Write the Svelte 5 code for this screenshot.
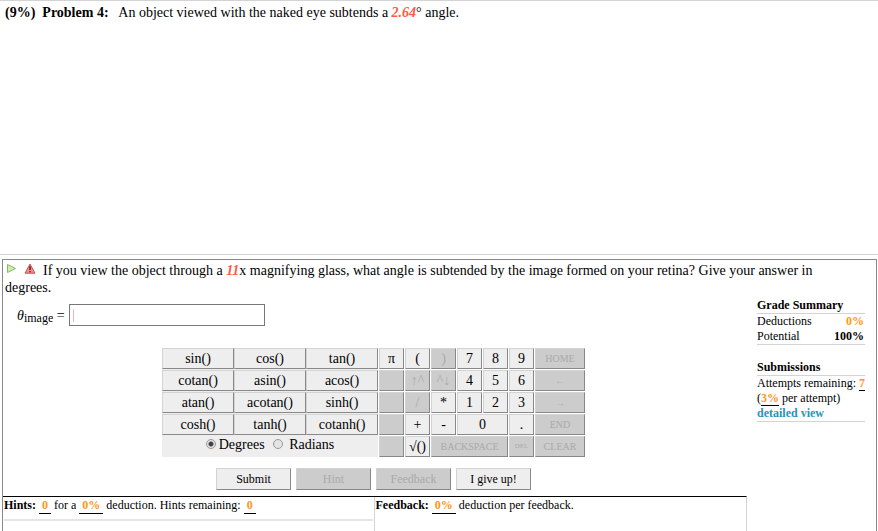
<script lang="ts">
	interface Key {
		label: string;
		name?: string;
		disabled?: boolean;
		span?: number;
		size?: 'small' | 'tiny';
	}

	const functions = [
		'sin()', 'cos()', 'tan()',
		'cotan()', 'asin()', 'acos()',
		'atan()', 'acotan()', 'sinh()',
		'cosh()', 'tanh()', 'cotanh()'
	];

	const keys: Key[] = [
		{ label: 'π' },
		{ label: '(' },
		{ label: ')', disabled: true },
		{ label: '7' },
		{ label: '8' },
		{ label: '9' },
		{ label: 'HOME', disabled: true, size: 'small' },

		{ label: '', name: 'unused', disabled: true },
		{ label: '↑^', disabled: true },
		{ label: '^↓', disabled: true },
		{ label: '4' },
		{ label: '5' },
		{ label: '6' },
		{ label: '←', disabled: true, size: 'small' },

		{ label: '', name: 'unused', disabled: true },
		{ label: '/', disabled: true },
		{ label: '*' },
		{ label: '1' },
		{ label: '2' },
		{ label: '3' },
		{ label: '→', disabled: true, size: 'small' },

		{ label: '', name: 'unused', disabled: true },
		{ label: '+' },
		{ label: '-' },
		{ label: '0', span: 2 },
		{ label: '.' },
		{ label: 'END', disabled: true, size: 'small' },

		{ label: '', name: 'unused', disabled: true },
		{ label: '√()' },
		{ label: 'BACKSPACE', disabled: true, span: 3, size: 'small' },
		{ label: 'DEL', disabled: true, size: 'tiny' },
		{ label: 'CLEAR', disabled: true, size: 'small' }
	];

	let answer = $state('');
	let angleMode = $state('degrees');

	function press(text: string) {
		answer += text;
	}
</script>

<div class="page">
	<section class="problem">
		<b>(9%)&nbsp; Problem 4:</b>&nbsp;&nbsp; An object viewed with the naked eye subtends a
		<em class="value">2.64</em>° angle.
	</section>

	<section class="part">
		<p class="question">
			<svg class="icon play" viewBox="0 0 12 12" aria-hidden="true">
				<path d="M1.5 1.5 L9.5 5.5 L1.5 9.5 Z" fill="#cdeeb0" stroke="#87b86a" stroke-linejoin="round" />
			</svg>
			<svg class="icon alert" viewBox="0 0 12 12" aria-hidden="true">
				<path d="M6 1 L11 10.2 H1 Z" fill="#ef8f8f" stroke="#c65454" stroke-linejoin="round" />
				<path d="M6 3.3 V7 M6 8 V9.3" stroke="#6d1111" stroke-width="1.4" />
			</svg>
			If you view the object through a <em class="value">11</em>x magnifying glass, what angle is
			subtended by the image formed on your retina? Give your answer in degrees.
		</p>

		<div class="columns">
			<div class="main">
				<div class="answer">
					<label for="answer"><i>θ</i><sub>image</sub> =</label>
					<input id="answer" type="text" autocomplete="off" bind:value={answer} />
				</div>

				<div class="calculator">
					<div class="functions">
						{#each functions as fn}
							<button class="key" type="button" onclick={() => press(fn)}>{fn}</button>
						{/each}
						<div class="modes">
							<label><input type="radio" value="degrees" bind:group={angleMode} />Degrees</label>
							<label><input type="radio" value="radians" bind:group={angleMode} />&nbsp;Radians</label>
						</div>
					</div>

					<div class="keypad">
						{#each keys as key}
							<button
								class="key {key.size ?? ''}"
								class:span2={key.span === 2}
								class:span3={key.span === 3}
								type="button"
								disabled={key.disabled}
								aria-label={key.name}
								onclick={() => press(key.label)}>{key.label}</button
							>
						{/each}
					</div>
				</div>

				<div class="actions">
					<button class="key" type="submit">Submit</button>
					<button class="key" type="button" disabled>Hint</button>
					<button class="key" type="button" disabled>Feedback</button>
					<button class="key" type="button">I give up!</button>
				</div>

				<div class="notes">
					<div class="hints">
						<div class="note-line">
							<b>Hints:</b> <span class="amount">0</span> for a <span class="amount">0%</span>
							deduction. Hints remaining: <span class="amount">0</span>
						</div>
					</div>
					<div class="feedback">
						<b>Feedback:</b> <span class="amount">0%</span> deduction per feedback.
					</div>
				</div>
			</div>

			<aside class="summary">
				<h2>Grade Summary</h2>
				<div class="block">
					<div class="row"><span>Deductions</span><b class="orange">0%</b></div>
					<div class="row"><span>Potential</span><b>100%</b></div>
				</div>

				<h2>Submissions</h2>
				<div class="block">
					<div>Attempts remaining: <span class="count">7</span></div>
					<div>(<span class="count">3%</span> per attempt)</div>
					<a href="#details">detailed view</a>
				</div>
			</aside>
		</div>
	</section>
</div>

<style>
	:global(body) {
		margin: 0;
		background: #fff;
	}

	.page {
		display: flex;
		flex-direction: column;
		min-height: 100vh;
		font-family: 'Liberation Serif', 'Times New Roman', serif;
		font-size: 14px;
		line-height: 17px;
		color: #000;
	}

	.problem {
		box-sizing: border-box;
		min-height: 255px;
		padding: 3px 5px;
		border-top: 1px solid #d3d3d3;
		border-bottom: 1px solid #d3d3d3;
	}

	.value {
		font-weight: bold;
		color: #ff5a46;
	}

	.part {
		display: flex;
		flex: 1;
		flex-direction: column;
		margin: 4px 1px 0 2px;
		border: 1px solid #888;
		border-bottom: 0;
	}

	.question {
		margin: 2px 16px 0 2px;
	}

	.icon {
		width: 12px;
		height: 12px;
	}

	.play {
		margin: 0 2px 0 1px;
	}

	.alert {
		margin-right: 4px;
	}

	.columns {
		display: flex;
		flex: 1;
	}

	.main {
		display: flex;
		flex: 1;
		flex-direction: column;
	}

	.answer {
		display: flex;
		align-items: center;
		gap: 4px;
		margin: 8px 0 0 14px;
	}

	.answer sub {
		font-size: 12px;
		line-height: 0;
		vertical-align: -2px;
	}

	.answer input {
		box-sizing: border-box;
		width: 196px;
		height: 22px;
		padding: 0 6px;
		border: 1px solid #777;
		font: inherit;
		background: linear-gradient(#f5b5bb, #f5b5bb) 3px center / 1px 13px no-repeat #fff;
	}

	.calculator {
		display: flex;
		justify-content: center;
		gap: 1px;
		margin: 22px 3px 0 0;
	}

	.functions {
		display: grid;
		grid-template-columns: repeat(3, 72px);
		grid-auto-rows: 21px;
		row-gap: 1px;
		background: #eee;
	}

	.keypad {
		display: grid;
		grid-template-columns: repeat(6, 25px) 50px;
		grid-auto-rows: 21px;
		gap: 1px;
	}

	.key {
		box-sizing: border-box;
		min-width: 0;
		padding: 0;
		border: 1px solid;
		border-color: #d3d3d3 #888 #888 #d3d3d3;
		background: #eee;
		font-family: inherit;
		font-size: 14px;
		line-height: 17px;
		color: #000;
		white-space: nowrap;
	}

	.key:disabled {
		background: #ccc;
		color: #aaa;
	}

	.small {
		font-size: 10px;
	}

	.tiny {
		font-size: 7px;
	}

	.span2 {
		grid-column: span 2;
	}

	.span3 {
		grid-column: span 3;
	}

	.modes {
		display: flex;
		grid-column: 1 / -1;
		justify-content: center;
		gap: 8px;
	}

	.modes label {
		display: flex;
		gap: 3px;
	}

	.modes input {
		appearance: none;
		box-sizing: border-box;
		width: 10px;
		height: 10px;
		margin: 3px 0 0;
		border: 1px solid #999;
		border-radius: 50%;
		background: #e4e4e4;
	}

	.modes input:checked {
		background: radial-gradient(circle, #444 2px, #e4e4e4 3px);
	}

	.actions {
		display: flex;
		justify-content: center;
		gap: 5px;
		margin: 11px 3px 0 0;
	}

	.actions .key {
		width: 75px;
		height: 22px;
		font-size: 12px;
	}

	.notes {
		display: flex;
		flex: 1;
		margin-top: 6px;
		border-top: 1px solid #000;
		border-right: 1px solid #d3d3d3;
		font-size: 12px;
	}

	.hints,
	.feedback {
		box-sizing: border-box;
		width: 50%;
		padding: 0 1px;
	}

	.hints {
		border-right: 1px solid #d3d3d3;
	}

	.note-line {
		height: 22px;
		border-bottom: 2px solid #e5e5e5;
	}

	.amount {
		display: inline-block;
		padding: 0 3px;
		border-bottom: 1px solid #000;
		line-height: 15px;
		font-weight: bold;
		color: #ff9620;
	}

	.summary {
		width: 108px;
		margin: 1px 11px 0 10px;
		font-size: 12px;
		line-height: 15px;
	}

	.summary h2 {
		margin: 0;
		font-size: 12px;
		line-height: 16px;
	}

	.block {
		margin-bottom: 14px;
		border: solid #d3d3d3;
		border-width: 1px 0;
	}

	.row {
		display: flex;
		justify-content: space-between;
		padding-right: 1px;
	}

	.orange,
	.count {
		font-weight: bold;
		color: #ff9620;
	}

	.count {
		display: inline-block;
		border-bottom: 1px solid #000;
		line-height: 14px;
	}

	.summary a {
		font-weight: bold;
		color: #2496bd;
		text-decoration: none;
	}
</style>
